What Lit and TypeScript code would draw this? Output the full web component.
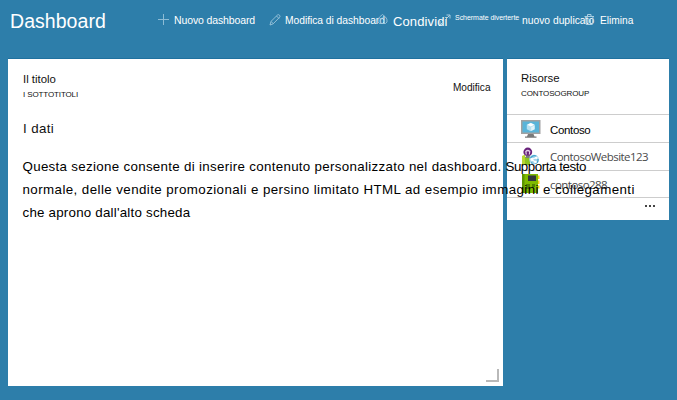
import { LitElement, html, css, svg } from "lit";
import { customElement } from "lit/decorators.js";

const plus = svg`<svg width="12" height="12" viewBox="0 0 12 12"><path d="M5.500 0v11M0 5.500h11" stroke="#8dbcd5" fill="none"/></svg>`;
const pencil = svg`<svg width="13" height="13" viewBox="0 0 13 13"><path d="M1 11l1-3.600L8.500 1q1-.8 2 .2t.2 2L4.200 9.800zM7.500 2l2.500 2.500M2.200 7.600l2 2" stroke="#9cc5db" stroke-width=".9" fill="none"/></svg>`;
const bell = svg`<svg width="12" height="12" viewBox="0 0 12 12"><path d="M1 8Q.5 5 2.500 3L5.500.5l3 2.500q2 2 1.500 5L8.500 9.500h-6zM3.500 9.500V6a2 2 0 0 1 4 0v3.500" stroke="#9cc5db" stroke-width=".9" fill="none"/></svg>`;
const arrow = svg`<svg width="13" height="13" viewBox="0 0 13 13"><path d="M1 7v4h4M1 11l3-3M6.500 5.500l4-4M7.500 1h3.500v3.500" stroke="#b9d7e7" stroke-width=".9" fill="none"/></svg>`;
const trash = svg`<svg width="11" height="12" viewBox="0 0 11 12"><path d="M.5 2.500h9.500M3.500 2.500v-2h3.500v2M1.500 2.500l.7 8h6.100l.7-8M4 4.500v4.500M6.500 4.500v4.500" stroke="#a9cee2" fill="none"/></svg>`;

const monitor = svg`<svg width="20" height="20" viewBox="0 0 20 20"><path d="M0 1h19.500v14H0z" fill="#a0a1a2"/><path d="M1.500 2.500H18v11H1.500z" fill="#59b4d9"/><path d="M7 15h5.500l1 2.500h2v1.300H4v-1.300h2z" fill="#7a7a7a"/><path d="M9.800 3.700l4 2v4.600l-4 2-4-2V5.700z" fill="#b8e0f0"/><path d="M9.800 4l3.500 1.800-3.500 1.800-3.500-1.800z" fill="#fff"/><path d="M10.200 8.200l3.300-1.700v3.700l-3.300 1.600z" fill="#e4f4fa"/></svg>`;
const site = svg`<svg width="20" height="20" viewBox="0 0 20 20"><path d="M1 9l3-1.500V18H1z" fill="#b8d432"/><path d="M4 10h5v8H4z" fill="#8cc220"/><circle cx="6.800" cy="5" r="4.400" fill="#68217a"/><path d="M5.300 7.500L4.800 4.500q2-2 4 0l-.5 3" stroke="#e3d0e8" stroke-width="1.200" fill="none"/><path d="M4.800 8.500h4v2.500h-4z" fill="#7a7a7a"/><circle cx="13" cy="12.500" r="4.800" fill="#a5d6ea"/><path d="M9.500 11a4 4 0 0 1 6-1.500M17 12a4 4 0 0 1-3 4.500M10 15.500l1.500 1" stroke="#45a5cf" stroke-width="1.200" fill="none"/><path d="M10.500 12.500l5-2M10.500 12.500l4 2.500" stroke="#fff" stroke-width="1.200"/><circle cx="10.800" cy="12.500" r="1.400" fill="#fff"/><circle cx="15.300" cy="10.800" r="1.300" fill="#fff"/><circle cx="14.500" cy="15" r="1.300" fill="#fff"/></svg>`;
const chip = svg`<svg width="20" height="20" viewBox="0 0 20 20"><path d="M1 0h16v19H1z" fill="#7fba00"/><path d="M1 0h2.500v19H1z" fill="#5c9400"/><path d="M7 1.500h8v5.500H7z" fill="#32373b"/><path d="M17 1.500h1.500v3.500H17zM17 6.500h1.500v3.500H17zM17 11.500h1.500v3H17z" fill="#fcd116"/><path d="M5 10h4v5H5zM11 10h3v3h-3z" fill="#4f8100"/></svg>`;

@customElement("app-root")
export class AppRoot extends LitElement {
  static styles = css`
    :host { display: block; height: 400px; overflow: hidden; background: #2d7eaa; font-family: "Liberation Sans", Arial, sans-serif; color: #111; }
    * { box-sizing: border-box; }
    svg { display: block; }
    .top { display: grid; grid-template-columns: 148px 111px 108px 62px 83px 62px 80px; height: 58px; padding-left: 10px; color: #fff; white-space: nowrap; }
    .title { font-size: 19.500px; line-height: 22px; padding-top: 10px; letter-spacing: 0.050px; }
    .cmd { display: flex; align-items: flex-start; font-size: 10.500px; line-height: 12px; padding-top: 14px; }
    .icon { flex: none; width: 16px; }
    .new { letter-spacing: -0.120px; }
    .edit { font-size: 10.300px; letter-spacing: -0.040px; }
    .edit .text { padding-top: 1px; }
    .share { font-size: 13px; line-height: 15px; letter-spacing: 0.120px; }
    .full { font-size: 7px; line-height: 8px; letter-spacing: -0.040px; }
    .dup { font-size: 10.300px; padding-top: 15px; }
    .del { font-size: 10.200px; }
    .del .text { padding-top: 1px; }
    .board { display: flex; align-items: flex-start; gap: 4.500px; padding: 1px 0 0 8px; }
    .tile { background: #fff; box-shadow: 0 -1px 0 #1f719f; }
    .note { position: relative; z-index: 1; width: 494.500px; height: 327px; padding: 14px 12px 0 15px; }
    .head { display: flex; justify-content: space-between; }
    .name { font-size: 11.400px; line-height: 13px; }
    .sub { font-size: 8px; line-height: 10px; margin-top: 4px; letter-spacing: -0.120px; white-space: nowrap; }
    .action { font-size: 10.100px; line-height: 12px; padding-top: 9px; }
    .lead { font-size: 13.300px; line-height: 16px; margin-top: 21px; letter-spacing: 0.380px; }
    .copy { margin: 18px 0 0 -0.500px; font-size: 13.330px; line-height: 23px; white-space: nowrap; color: #000; }
    .l1 { letter-spacing: 0.310px; }
    .tight { letter-spacing: -0.440px; }
    .l2 { letter-spacing: 0.420px; }
    .l3 { letter-spacing: 0.220px; }
    .grip { position: absolute; right: 4px; bottom: 4px; width: 13px; height: 13px; border: solid #b9b9b9; border-width: 0 2px 2px 0; }
    .res { width: 162px; height: 161px; }
    .rhead { height: 55px; padding: 13px 14px 0; }
    .row { display: flex; align-items: center; gap: 9px; height: 28px; padding-left: 14px; border-top: 1px solid #cdcdcd; font-size: 11.500px; letter-spacing: -0.350px; color: #000; }
    .row:nth-child(4) { height: 27px; }
    .row .text { padding-top: 2px; }
    .row .seg { padding: 0; font-family: "Open Sans", "Noto Sans", sans-serif; font-size: 11.500px; font-weight: 500; letter-spacing: -0.550px; color: #4a4a4a; }
    .more { display: flex; justify-content: flex-end; gap: 2px; border-top: 1px solid #cdcdcd; padding: 7px 14px 0 0; }
    .dot { width: 2px; height: 2px; background: #444; }
  `;

  render() {
    return html`
      <header class="top">
        <div class="title">Dashboard</div>
        <div class="cmd new"><span class="icon">${plus}</span>Nuovo dashboard</div>
        <div class="cmd edit"><span class="icon">${pencil}</span><span class="text">Modifica di dashboard</span></div>
        <div class="cmd share"><span class="icon">${bell}</span>Condividi</div>
        <div class="cmd full"><span class="icon">${arrow}</span>Schermate diverterte</div>
        <div class="cmd dup">nuovo duplicato</div>
        <div class="cmd del"><span class="icon">${trash}</span><span class="text">Elimina</span></div>
      </header>
      <main class="board">
        <section class="tile note">
          <div class="head">
            <div><div class="name">Il titolo</div><div class="sub">I SOTTOTITOLI</div></div>
            <div class="action">Modifica</div>
          </div>
          <div class="lead">I dati</div>
          <div class="copy">
            <div class="l1">Questa sezione consente di inserire contenuto personalizzato nel dashboard. <span class="tight">Supporta testo</span></div>
            <div class="l2">normale, delle vendite promozionali e persino limitato HTML ad esempio immagini e collegamenti</div>
            <div class="l3">che aprono dall'alto scheda</div>
          </div>
          <div class="grip"></div>
        </section>
        <section class="tile res">
          <div class="rhead"><div class="name">Risorse</div><div class="sub">CONTOSOGROUP</div></div>
          <div class="row">${monitor}<span class="text">Contoso</span></div>
          <div class="row">${site}<span class="text seg">ContosoWebsite123</span></div>
          <div class="row">${chip}<span class="text seg">contoso288</span></div>
          <div class="more"><i class="dot"></i><i class="dot"></i><i class="dot"></i></div>
        </section>
      </main>`;
  }
}
